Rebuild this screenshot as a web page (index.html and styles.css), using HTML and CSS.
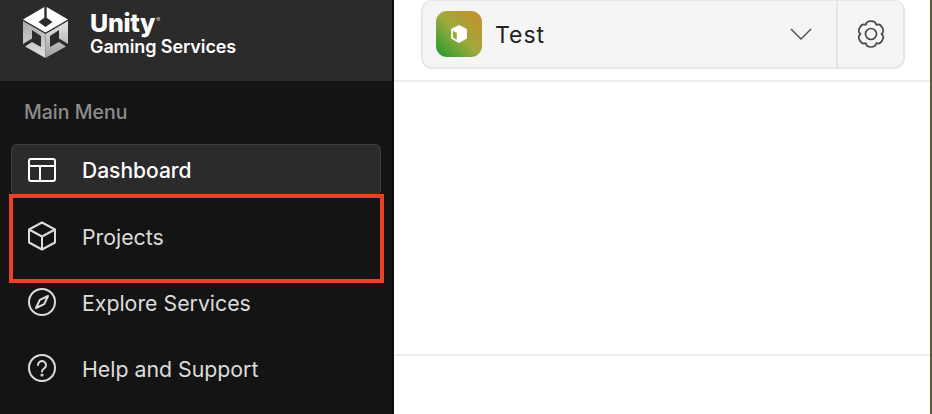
FILE: index.html
```html
<!DOCTYPE html>
<html lang="en">
<head>
<meta charset="utf-8">
<title>Unity Gaming Services</title>
<link rel="stylesheet" href="styles.css">
</head>
<body>
<div class="app">
  <aside class="sidebar">
    <div class="brand">
      <svg class="logo" width="46" height="52" viewBox="0 0 46 52" aria-hidden="true">
        <defs>
          <linearGradient id="faceL" x1="0" y1="0" x2="0" y2="1"><stop offset="0" stop-color="#a8a8a8"/><stop offset="1" stop-color="#e2e2e2"/></linearGradient>
          <linearGradient id="faceR" x1="0" y1="0" x2="0" y2="1"><stop offset="0" stop-color="#e8e8e8"/><stop offset="1" stop-color="#9c9c9c"/></linearGradient>
        </defs>
        <path fill="#fff" d="M21.300 0V10.800L15.500 15 22.500 20 29.500 15 23.700 10.800V0L45 12.500 22.500 25.500 0 12.500Z"/>
        <path fill="url(#faceL)" d="M0 14 22.500 27V51L2 39.500 9 35 18 40V29L9 23V31.500L0 37Z"/>
        <path fill="url(#faceR)" d="M45 14 22.500 27V51L43 39.500 36 35 27 40V29L36 23V31.500L45 37Z"/>
      </svg>
      <div class="wordmark">
        <span class="word-unity">Unity<span class="reg">®</span></span>
        <span class="word-sub">Gaming Services</span>
      </div>
    </div>
    <nav class="menu">
      <div class="menu-title">Main Menu</div>
      <a class="item item-active">
        <svg class="icon" width="28" height="26" viewBox="0 0 28 26" fill="none" stroke="currentColor" stroke-width="2" aria-hidden="true"><rect x="1" y="2" width="26" height="22" rx="2"/><path d="M1 9h26M12 9v15"/></svg>
        <span>Dashboard</span>
      </a>
      <a class="item">
        <svg class="icon" width="28" height="30" viewBox="0 0 28 30" fill="none" stroke="currentColor" stroke-width="2" stroke-linejoin="round" aria-hidden="true"><path d="M14 1.500 27 8.500V21.500L14 28.500 1 21.500V8.500ZM1 8.500 14 15.500 27 8.500M14 15.500V28.500"/></svg>
        <span>Projects</span>
      </a>
      <a class="item">
        <svg class="icon" width="28" height="28" viewBox="0 0 28 28" fill="none" stroke="currentColor" stroke-width="2" stroke-linejoin="round" aria-hidden="true"><circle cx="14" cy="14" r="13"/><path d="M20 8 16.200 16.200 8 20 11.800 11.800Z"/></svg>
        <span>Explore Services</span>
      </a>
      <a class="item">
        <svg class="icon" width="28" height="28" viewBox="0 0 28 28" fill="none" stroke="currentColor" stroke-width="2" stroke-linecap="round" aria-hidden="true"><circle cx="14" cy="14" r="13"/><path d="M10 11a4 4 0 1 1 6 3.500c-1.300.8-2 1.500-2 3"/><circle cx="14" cy="21" r=".6"/></svg>
        <span>Help and Support</span>
      </a>
    </nav>
    <div class="callout"></div>
  </aside>
  <main class="main">
    <header class="topbar">
      <div class="selector">
        <div class="project">
          <div class="avatar">
            <svg width="16" height="18" viewBox="0 0 14 16" aria-hidden="true"><path fill="#fff" d="M7 0 14 3.500V12L7 16 0 12V3.500Z"/><path fill="#9aa83a" d="M1.500 5 5 7V13L1.500 11Z"/></svg>
          </div>
          <span class="project-name">Test</span>
          <svg class="chevron" width="22" height="12" viewBox="0 0 22 12" fill="none" stroke="#555" stroke-width="1.500" aria-hidden="true"><path d="M1 1 11 11 21 1"/></svg>
        </div>
        <div class="settings">
          <svg width="28" height="28" viewBox="0 0 28 28" fill="none" stroke="#4a4a4a" stroke-width="1.700" stroke-linejoin="round" aria-hidden="true"><circle cx="14" cy="14" r="5.500"/><path d="M8.750 4.910C9.360-.27 18.640-.27 19.250 4.910 24.040 2.850 28.670 10.880 24.500 14 28.670 17.120 24.040 25.150 19.250 23.090 18.640 28.270 9.360 28.270 8.750 23.090 3.960 25.150-.67 17.120 3.500 14-.67 10.880 3.960 2.850 8.750 4.910Z"/></svg>
        </div>
      </div>
    </header>
    <div class="content"></div>
    <footer class="footer"></footer>
  </main>
</div>
</body>
</html>
```
FILE: styles.css
```css
* { box-sizing: border-box; }
html, body { margin: 0; height: 100%; }
body { font-family: Inter, "Liberation Sans", sans-serif; background: #fff; overflow: hidden; }
.app { display: flex; width: 932px; height: 414px; }
.sidebar { position: relative; width: 394px; flex: none; background: #141414; border-right: 2px solid #0c0c0c; display: flex; flex-direction: column; }
.brand { height: 81px; background: #2b2b2b; display: flex; align-items: flex-start; padding: 7px 0 0 23px; gap: 21px; }
.logo { display: block; }
.wordmark { display: flex; flex-direction: column; color: #fff; padding-top: 3px; }
.word-unity { font-size: 25px; font-weight: 800; line-height: 27px; letter-spacing: -0.3px; }
.reg { font-size: 6px; font-weight: 400; vertical-align: 10px; line-height: 0; color: #ccc; margin-left: 1px; }
.word-sub { font-size: 18px; font-weight: 600; line-height: 20px; letter-spacing: -0.100px; }
.menu { display: flex; flex-direction: column; gap: 14px; padding: 18px 11px 0; }
.menu-title { color: #8c8c8c; font-size: 19.500px; font-weight: 500; line-height: 26px; padding-left: 13px; margin-bottom: 5px; }
.item { height: 52px; display: flex; align-items: center; gap: 26px; padding: 1px 0 0 17px; color: #dcdcdc; font-size: 21.300px; line-height: 28px; border-radius: 6px; border: 1px solid transparent; }
.icon { display: block; flex: none; width: 28px; margin-top: -1px; margin-left: -1px; }
.item-active { background: #2b2b2b; color: #fff; font-size: 21px; font-weight: 500; border-color: #3d3d3d; border-bottom-color: transparent; }
.callout { position: absolute; left: 9px; top: 194px; width: 375px; height: 89px; border: 4px solid #ea4226; }
.main { flex: 1; display: flex; flex-direction: column; border-right: 2px solid #5a5a34; }
.topbar { height: 82px; flex: none; border-bottom: 2px solid #ececec; padding-left: 27px; }
.selector { width: 484px; height: 69px; display: flex; background: #f5f5f5; border: 2px solid #e6e6e6; border-top-width: 1px; border-radius: 11px; }
.project { flex: 1; display: flex; align-items: center; padding: 0 24px 0 13px; border-right: 2px solid #e6e6e6; }
.avatar { width: 46px; height: 46px; border-radius: 11px; background: linear-gradient(45deg, #1f9a2e 0%, #9fa93c 50%, #bd962f 85%); display: flex; align-items: center; justify-content: center; }
.project-name { flex: 1; margin: 1px 0 0 13px; color: #222; font-size: 23px; font-weight: 400; letter-spacing: 1px; }
.chevron { display: block; }
.settings { width: 65px; display: flex; align-items: center; justify-content: center; }
.content { flex: 1; }
.footer { height: 60px; flex: none; border-top: 2px solid #ececec; }
```
